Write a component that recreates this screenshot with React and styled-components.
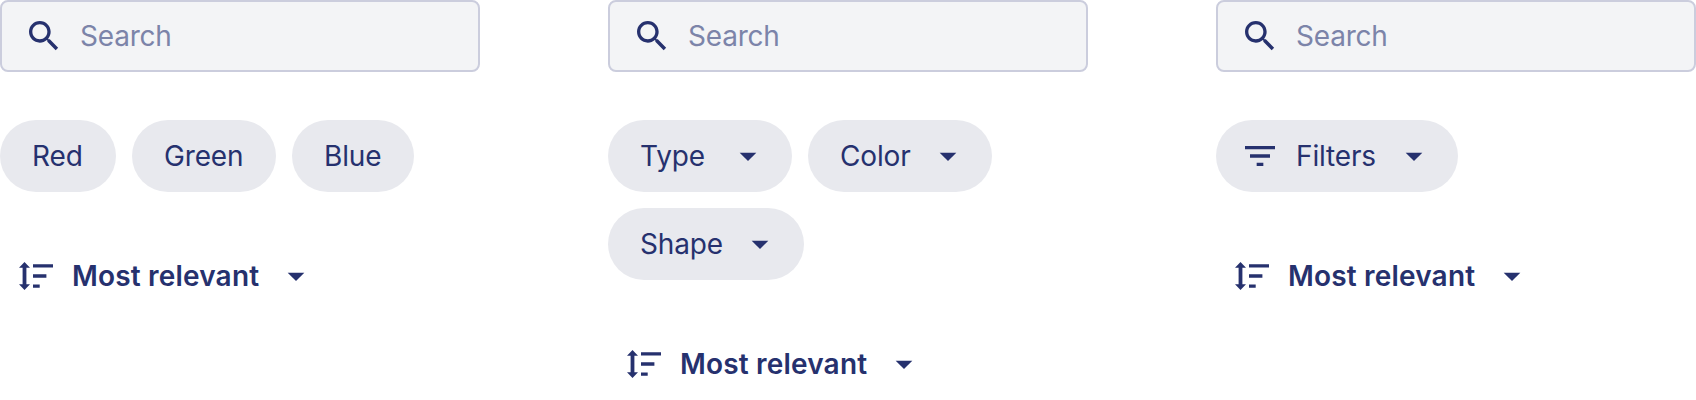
import React from 'react';
import styled, { createGlobalStyle } from 'styled-components';

const GlobalStyle = createGlobalStyle`
  * { box-sizing: border-box; }
  body { margin: 0; background: #fff; font-family: Inter, 'Liberation Sans', sans-serif; }
`;

const Page = styled.main`
  display: grid;
  grid-template-columns: repeat(3, 480px);
  column-gap: 128px;
  align-items: start;
  height: 400px;
  overflow: hidden;
`;

const Panel = styled.section`
  display: flex;
  flex-direction: column;
  gap: 48px;
`;

const SearchBox = styled.div`
  display: flex;
  align-items: center;
  gap: 16px;
  height: 72px;
  padding: 0 22px;
  border: 2px solid #cbcddd;
  border-radius: 8px;
  background: #f3f4f6;
  color: #26316e;
`;

const Placeholder = styled.span`
  font-size: 28px;
  line-height: 40px;
  letter-spacing: -0.2px;
  color: #7c84a9;
`;

const Chips = styled.div`
  display: flex;
  flex-wrap: wrap;
  gap: 16px;
`;

const Chip = styled.button`
  display: flex;
  align-items: center;
  gap: 16px;
  height: 72px;
  width: ${(p) => p.$width}px;
  padding: 0 ${(p) => (p.$caret ? 24 : 32)}px 0 ${(p) => (p.$icon ? 24 : 32)}px;
  border: 0;
  border-radius: 36px;
  background: #e8e9ee;
  color: #26316e;
  font: 400 28px/40px Inter, 'Liberation Sans', sans-serif;
  letter-spacing: -0.15px;
`;

const ChipLabel = styled.span`
  flex: 1;
  text-align: left;
  white-space: nowrap;
`;

const SortButton = styled.button`
  display: flex;
  align-items: center;
  align-self: flex-start;
  gap: 16px;
  height: 72px;
  width: 332px;
  padding: 0 16px;
  border: 0;
  background: transparent;
  color: #26316e;
  font: 600 28px/40px Inter, 'Liberation Sans', sans-serif;
  letter-spacing: 0.18px;
`;

const Svg = styled.svg`
  display: block;
  flex: none;
  width: 40px;
  height: 40px;
  fill: currentColor;
`;

const SearchIcon = () => (
  <Svg viewBox="0 0 24 24">
    <path d="M15.5 14h-.79l-.28-.27C15.41 12.59 16 11.11 16 9.5 16 5.91 13.09 3 9.5 3S3 5.91 3 9.5 5.91 16 9.5 16c1.61 0 3.09-.59 4.23-1.57l.27.28v.79l5 4.99L20.49 19l-4.99-5zm-6 0C7.01 14 5 11.99 5 9.5S7.01 5 9.5 5 14 7.01 14 9.5 11.99 14 9.5 14z" />
  </Svg>
);

const CaretIcon = () => (
  <Svg viewBox="0 0 24 24">
    <path d="M7 10l5 5 5-5z" />
  </Svg>
);

const FilterIcon = () => (
  <Svg viewBox="0 0 24 24">
    <path d="M10 18h4v-2h-4v2zM3 6v2h18V6H3zm3 7h12v-2H6v2z" />
  </Svg>
);

const SortIcon = () => (
  <Svg viewBox="0 0 40 40">
    <path d="M8.5 6L14 11.7H10.4V28.3H14L8.5 34L3 28.3H6.6V11.7H3zM17 8.2H37V11.5H17zM17 18.3H30.4V21.7H17zM17 28.4H23.7V31.7H17z" />
  </Svg>
);

const Search = () => (
  <SearchBox>
    <SearchIcon />
    <Placeholder>Search</Placeholder>
  </SearchBox>
);

const FilterChip = ({ label, width, caret, icon }) => (
  <Chip $width={width} $caret={caret} $icon={icon}>
    {icon && <FilterIcon />}
    <ChipLabel>{label}</ChipLabel>
    {caret && <CaretIcon />}
  </Chip>
);

const Sort = () => (
  <SortButton>
    <SortIcon />
    <ChipLabel>Most relevant</ChipLabel>
    <CaretIcon />
  </SortButton>
);

const panels = [
  [
    { label: 'Red', width: 116 },
    { label: 'Green', width: 144 },
    { label: 'Blue', width: 122 },
  ],
  [
    { label: 'Type', width: 184, caret: true },
    { label: 'Color', width: 184, caret: true },
    { label: 'Shape', width: 196, caret: true },
  ],
  [{ label: 'Filters', width: 242, caret: true, icon: true }],
];

export default function App() {
  return (
    <>
      <GlobalStyle />
      <Page>
        {panels.map((chips, i) => (
          <Panel key={i}>
            <Search />
            <Chips>
              {chips.map((chip) => (
                <FilterChip key={chip.label} {...chip} />
              ))}
            </Chips>
            <Sort />
          </Panel>
        ))}
      </Page>
    </>
  );
}
